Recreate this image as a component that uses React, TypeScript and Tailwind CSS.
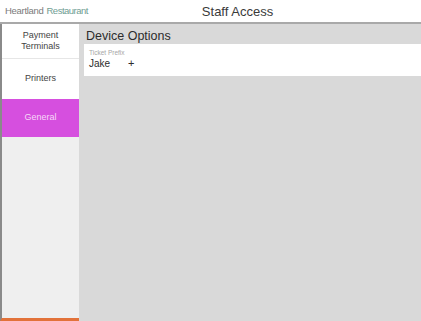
export default function App() {
  const font = { fontFamily: '"Helvetica Neue", "Liberation Sans", Arial, sans-serif' }
  return (
    <div className="w-[421px] h-[321px] flex flex-col bg-white overflow-hidden" style={font}>
      <header className="h-[24px] shrink-0 flex items-center relative border-b-2 border-[#a9a9a9]">
        <div className="absolute left-[5px] top-[6px] text-[9.5px] leading-none">
          <span className="text-[#7a7a7a] tracking-[-0.3px]">Heartland</span>
          <span className="text-[#6f9d93] font-medium ml-[3px] tracking-[-0.5px]">Restaurant</span>
        </div>
        <h1 className="flex-1 text-center pl-[54px] text-[13px] leading-none text-[#3a3a3a] pt-[1px]">Staff Access</h1>
      </header>

      <div className="flex-1 flex min-h-0">
        <aside className="w-[79px] shrink-0 flex flex-col border-l-2 border-[#8a8a8a] border-b-[3px] border-b-[#e2723a] bg-[#efefef]">
          <div className="h-[35px] bg-white flex items-center justify-center text-center text-[9px] leading-[11px] text-[#444] border-b border-[#e6e6e6]">
            Payment<br />Terminals
          </div>
          <div className="h-[40px] bg-white flex items-center justify-center text-[9px] text-[#444]">
            Printers
          </div>
          <div className="h-[38px] bg-[#d64fdf] flex items-center justify-center text-[9px] text-[#f6d8f8]">
            General
          </div>
        </aside>

        <main className="flex-1 bg-[#d9d9d9] pt-[5px] pl-[5px]">
          <h2 className="pl-[2px] text-[12.5px] leading-[15px] text-[#2c2c2c]">Device Options</h2>
          <div className="bg-white h-[32px] px-[5px] pt-[5px]">
            <div className="text-[6.5px] leading-[8px] text-[#a6a6a6]">Ticket Prefix</div>
            <div className="flex items-center text-[10px] leading-[13px] text-[#2c2c2c]">
              <span className="w-[39px]">Jake</span>
              <span className="text-[11px]">+</span>
            </div>
          </div>
        </main>
      </div>
    </div>
  )
}
